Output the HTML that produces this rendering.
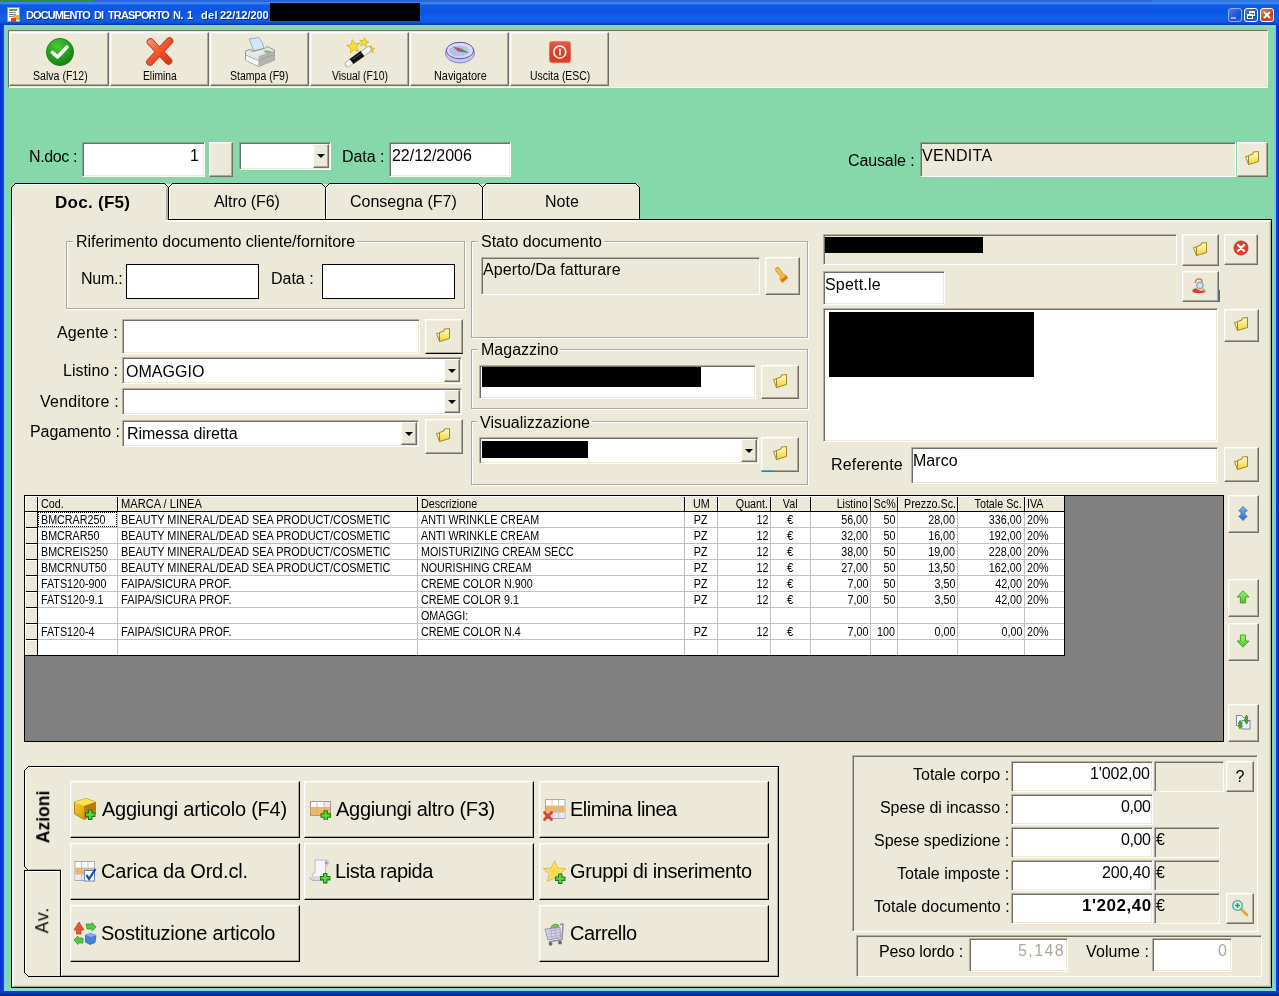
<!DOCTYPE html>
<html lang="it"><head><meta charset="utf-8"><title>DOCUMENTO DI TRASPORTO</title>
<style>
*{box-sizing:border-box;margin:0;padding:0}
html,body{width:1279px;height:996px;overflow:hidden;background:#0a3fd0}
body{position:relative;font-family:"Liberation Sans",sans-serif;font-size:16px;color:#000;line-height:1}
div,span,svg,input{position:absolute}
.t{white-space:pre;line-height:1;display:block;will-change:transform}
.face{background:#ece9d8}
.btn{background:#ece9d8;border:1px solid;border-color:#fff #716f64 #716f64 #fff;box-shadow:inset -1px -1px 0 #aca899,inset 1px 1px 0 #f4f2e8}
.btnk{background:#ece9d8;border:1px solid;border-color:#fff #000 #000 #fff;box-shadow:inset -1px -1px 0 #aca899,inset 1px 1px 0 #f4f2e8}
.btnb{background:#ece9d8;border:1px solid;border-color:#fff #716f64 #000 #fff;box-shadow:inset -1px -1px 0 #aca899,inset 1px 1px 0 #f4f2e8}
.edit{background:#fff;border:1px solid;border-color:rgba(113,111,100,.45) #fff #fff rgba(113,111,100,.45);background-clip:padding-box;box-shadow:inset 1px 1px 0 #716f64,inset -1px -1px 0 #ece9d8}
.editg{background:#ece9d8;border:1px solid;border-color:rgba(113,111,100,.45) #fff #fff rgba(113,111,100,.45);background-clip:padding-box;box-shadow:inset 1px 1px 0 #716f64,inset -1px -1px 0 #ece9d8}
.flat{background:#fff;border:1px solid #000}
.grp{border:1px solid #aca899;box-shadow:1px 1px 0 #fff,inset 1px 1px 0 #fff}
.leg{background:#ece9d8;padding:0 2px 0 3px}
.sunk{background:#ece9d8;border:1px solid;border-color:#8c8a7c #fff #fff #8c8a7c}
.red{background:#000}
.cb{background:#ece9d8;border:1px solid;border-color:#fff #716f64 #716f64 #fff;box-shadow:inset -1px -1px 0 #aca899}
.cb:after{content:"";position:absolute;left:50%;top:50%;margin:-2px 0 0 -4px;border:4px solid transparent;border-top-color:#000;border-bottom-width:0}
.g{font-size:12px}
.tb{font-size:12px}
.sx{position:static;display:inline-block}
.big{font-size:20px;letter-spacing:-0.27px}
.gray{color:#aca899}
</style></head>
<body>
<svg width="0" height="0" style="left:0;top:0"><defs>
<linearGradient id="gfo" x1="0" y1="0" x2="0" y2="1"><stop offset="0" stop-color="#fffbc8"/><stop offset="1" stop-color="#f2d534"/></linearGradient>
<radialGradient id="ggr" cx="0.4" cy="0.3" r="0.8"><stop offset="0" stop-color="#4cc83c"/><stop offset="0.6" stop-color="#1f9a1a"/><stop offset="1" stop-color="#157a14"/></radialGradient>
<linearGradient id="grd" x1="0" y1="0" x2="1" y2="1"><stop offset="0" stop-color="#ff8a6a"/><stop offset="0.5" stop-color="#f4502a"/><stop offset="1" stop-color="#d83a18"/></linearGradient>
<linearGradient id="gex" x1="0" y1="0" x2="0" y2="1"><stop offset="0" stop-color="#e0604a"/><stop offset="0.6" stop-color="#d0402c"/><stop offset="1" stop-color="#e83c20"/></linearGradient>
<linearGradient id="gbl" x1="0" y1="0" x2="0" y2="1"><stop offset="0" stop-color="#7ab8f0"/><stop offset="1" stop-color="#2a6fd0"/></linearGradient>
<linearGradient id="ggn" x1="0" y1="0" x2="0" y2="1"><stop offset="0" stop-color="#a0f070"/><stop offset="1" stop-color="#48c828"/></linearGradient>
<linearGradient id="gbx" x1="0" y1="0" x2="1" y2="1"><stop offset="0" stop-color="#ffd830"/><stop offset="1" stop-color="#c08000"/></linearGradient>
</defs></svg>
<div style="left:0px;top:0px;width:1279px;height:996px;background:linear-gradient(#0b4bd8,#0b4bd8)"></div>
<div style="left:0px;top:0px;width:4px;height:996px;background:linear-gradient(90deg,#0a2fd0,#0c3fe0 60%,#1650d8)"></div>
<div style="left:1276px;top:0px;width:3px;height:996px;background:linear-gradient(90deg,#0c3fd8,#0a2ccc)"></div>
<div style="left:0px;top:991px;width:1279px;height:5px;background:linear-gradient(#0a4fb0,#0a3aa8 40%,#001e98)"></div>
<div style="left:0px;top:0px;width:1279px;height:25px;background:linear-gradient(#2d62d8 0,#2d62d8 2px,#3f8cf5 2px,#2f7ff0 4px,#1059e6 5px,#0c56e4 12px,#1260ea 19px,#0e58e2 22px,#0840c0 24px,#0a3cb4 25px)"></div>
<div style="left:0px;top:0px;width:93px;height:2px;background:#2f8a45"></div>
<div style="left:1152px;top:0px;width:127px;height:2px;background:#3078e0"></div>
<div style="left:4px;top:25px;width:1272px;height:966px;background:#87d8a9"></div>
<div style="left:4px;top:25px;width:1272px;height:1px;background:#8ccce8"></div>
<div style="left:4px;top:26px;width:1272px;height:1px;background:#98d8c0"></div>
<div style="left:4px;top:25px;width:1px;height:966px;background:#7ccfd8"></div>
<div style="left:1274px;top:25px;width:2px;height:966px;background:#7cc8e0"></div>
<div style="left:4px;top:989px;width:1272px;height:2px;background:#86d4e4"></div>
<svg style="left:7px;top:7px" width="14" height="16" viewBox="0 0 14 16"><rect x="0.5" y="0.5" width="12" height="14" fill="#fdfdf0" stroke="#8a9ab0"/><rect x="2" y="2" width="8" height="2" fill="#5aa05a"/><rect x="2" y="5" width="7" height="1" fill="#889"/><rect x="2" y="7" width="7" height="1" fill="#889"/><rect x="2" y="9" width="5" height="1" fill="#889"/><rect x="6" y="8" width="6" height="5" fill="#e8b030"/><rect x="4" y="11" width="5" height="4" fill="#e04020"/></svg>
<span class="t" style="left:25.75px;top:9.5px;letter-spacing:-0.900px;font-size:11px;font-weight:bold;color:#fff;text-shadow:1px 1px 0 #0a2a90">DOCUMENTO </span>
<span class="t" style="left:94.25px;top:9.5px;letter-spacing:-0.900px;font-size:11px;font-weight:bold;color:#fff;text-shadow:1px 1px 0 #0a2a90">DI </span>
<span class="t" style="left:107.5px;top:9.5px;letter-spacing:-0.875px;font-size:11px;font-weight:bold;color:#fff;text-shadow:1px 1px 0 #0a2a90">TRASPORTO </span>
<span class="t" style="left:172.5px;top:9.5px;letter-spacing:-0.800px;font-size:11px;font-weight:bold;color:#fff;text-shadow:1px 1px 0 #0a2a90">N. </span>
<span class="t" style="left:186.75px;top:9.5px;letter-spacing:-0.300px;font-size:11px;font-weight:bold;color:#fff;text-shadow:1px 1px 0 #0a2a90">1  </span>
<span class="t" style="left:200.5px;top:9.5px;letter-spacing:0.300px;font-size:11px;font-weight:bold;color:#fff;text-shadow:1px 1px 0 #0a2a90">del </span>
<span class="t" style="left:220.25px;top:9.5px;letter-spacing:-0.025px;font-size:11px;font-weight:bold;color:#fff;text-shadow:1px 1px 0 #0a2a90">22/12/200</span>
<div class="red" style="left:270px;top:3px;width:150px;height:18px;"></div>
<div style="left:1228px;top:8px;width:14px;height:14px;background:linear-gradient(135deg,#4a7af0,#1f4fd8 60%,#2a5ae0);border:1px solid #8ab0f8;border-radius:3px;overflow:hidden"><svg width="14" height="14" style="left:-1px;top:-1px"><rect x="3" y="9" width="5" height="2" fill="#9ab4f0"/></svg></div>
<div style="left:1244px;top:8px;width:14px;height:14px;background:linear-gradient(135deg,#4a7af0,#1f4fd8 60%,#2a5ae0);border:1px solid #fff;border-radius:3px;overflow:hidden"><svg width="14" height="14" style="left:-1px;top:-1px"><rect x="5.5" y="3.5" width="5" height="4" fill="none" stroke="#fff"/><rect x="3.5" y="6.5" width="5" height="4" fill="#2a50d0" stroke="#fff"/><rect x="5" y="3" width="6" height="2" fill="#fff"/><rect x="3" y="6" width="6" height="2" fill="#fff"/></svg></div>
<div style="left:1260px;top:8px;width:14px;height:14px;background:linear-gradient(135deg,#e8875a,#c8401c 60%,#d0502a);border:1px solid #fff;border-radius:3px;overflow:hidden"><svg width="14" height="14" style="left:-1px;top:-1px"><path d="M4 4 L10 10 M10 4 L4 10" stroke="#fff" stroke-width="2"/></svg></div>
<div style="left:8px;top:30px;width:1260px;height:58px;background:#ece9d8;border:1px solid;border-color:#716f64 #fff #fff #716f64"></div>
<div class="btn" style="left:9px;top:32px;width:100px;height:54px;"></div>
<span class="t tb" style="left:32.75px;top:70.0px;"><span class="sx" style="transform:scaleX(0.8811);transform-origin:0 50%;">Salva (F12)</span></span>
<div class="btn" style="left:110px;top:32px;width:99px;height:54px;"></div>
<span class="t tb" style="left:143.0px;top:70.0px;"><span class="sx" style="transform:scaleX(0.8553);transform-origin:0 50%;">Elimina</span></span>
<div class="btn" style="left:210px;top:32px;width:99px;height:54px;"></div>
<span class="t tb" style="left:230.25px;top:70.0px;"><span class="sx" style="transform:scaleX(0.8769);transform-origin:0 50%;">Stampa (F9)</span></span>
<div class="btn" style="left:310px;top:32px;width:99px;height:54px;"></div>
<span class="t tb" style="left:332.0px;top:70.0px;"><span class="sx" style="transform:scaleX(0.8672);transform-origin:0 50%;">Visual (F10)</span></span>
<div class="btn" style="left:410px;top:32px;width:99px;height:54px;"></div>
<span class="t tb" style="left:433.5px;top:70.0px;"><span class="sx" style="transform:scaleX(0.9079);transform-origin:0 50%;">Navigatore</span></span>
<div class="btn" style="left:510px;top:32px;width:99px;height:54px;"></div>
<span class="t tb" style="left:530.0px;top:70.0px;"><span class="sx" style="transform:scaleX(0.8696);transform-origin:0 50%;">Uscita (ESC)</span></span>
<svg style="left:45px;top:36.7px" width="30" height="30" viewBox="0 0 30 30"><circle cx="15" cy="15" r="13.6" fill="url(#ggr)" stroke="#1a7a1a" stroke-width="0.8"/><path d="M7.5 15.5 L12.5 20 L22 10" fill="none" stroke="#fff" stroke-width="3.6" stroke-linecap="round" stroke-linejoin="round"/></svg>
<svg style="left:145px;top:36.7px" width="30" height="30" viewBox="0 0 30 30"><g fill="none" stroke-linecap="round"><path d="M5.5 5 L23.5 24 M24.5 4 L5 25" stroke="#b83a1c" stroke-width="7.6"/><path d="M5.5 5 L23.5 24 M24.5 4 L5 25" stroke="url(#grd)" stroke-width="5.8"/></g></svg>
<svg style="left:244px;top:36px" width="32" height="32" viewBox="0 0 32 32"><path d="M5 3 L15 1.5 Q19 6 20 12.5 L9 15 Q8 8 5 3 Z" fill="#cfe6fb" stroke="#8aa0b8" stroke-width="0.8"/><path d="M1.5 15 L6 13.5 L8.5 15.5 L20.5 12.5 L23 10.5 L30.5 14 L30.5 24 L14.5 30.5 L1.5 24 Z" fill="#e8e8e8" stroke="#8a8a8a" stroke-width="0.9" stroke-linejoin="round"/><path d="M14.5 20 L30.5 14.5 L30.5 24 L14.5 30.5 Z" fill="#b4b4b0"/><path d="M1.5 19 L14.5 24.5 L30.5 18.5" fill="none" stroke="#9a9a9a" stroke-width="0.8"/><path d="M2 20 L14 25 L14 30 L2 24 Z" fill="#fafafa"/><path d="M22 14 L28 15.5 L25 17.5 L19 16 Z" fill="#7cc088"/></svg>
<svg style="left:344px;top:35.6px" width="32" height="32" viewBox="0 0 32 32"><polygon points="8.3,3.6 10.9,7.7 15.7,7.2 12.6,10.9 14.5,15.4 10.0,13.6 6.4,16.8 6.7,12.0 2.6,9.5 7.2,8.3" fill="#f8e02c" stroke="#d8b020" stroke-width="0.8" stroke-linejoin="round"/><polygon points="20.8,1.8 21.6,5.0 24.8,5.8 21.9,7.5 22.1,10.8 19.6,8.6 16.5,9.8 17.9,6.8 15.8,4.2 19.1,4.6" fill="#f8e02c" stroke="#d8b020" stroke-width="0.8" stroke-linejoin="round"/><polygon points="27.0,9.7 28.0,12.1 30.6,12.3 28.6,14.0 29.2,16.6 27.0,15.2 24.8,16.6 25.4,14.0 23.4,12.3 26.0,12.1" fill="#f8e02c" stroke="#d8b020" stroke-width="0.8" stroke-linejoin="round"/><path d="M4 28 L24.5 13.5" stroke="#a8a8a8" stroke-width="6.4" stroke-linecap="round"/><path d="M4 28 L24.5 13.5" stroke="#f6f6f6" stroke-width="4.6" stroke-linecap="round"/><path d="M7.5 25.5 L18.5 17.7" stroke="#111" stroke-width="6.4" stroke-linecap="butt"/><path d="M8.5 23.3 L18 16.6" stroke="#555" stroke-width="1" /></svg>
<svg style="left:444px;top:40px" width="32" height="24" viewBox="0 0 32 24"><ellipse cx="16" cy="13" rx="14.6" ry="10" fill="#c8c4f0" stroke="#8a86c0" stroke-width="1"/><ellipse cx="16" cy="10.5" rx="13.6" ry="8.2" fill="#dcd8fa" stroke="#5a58a0" stroke-width="1"/><ellipse cx="15" cy="11" rx="10" ry="5.5" fill="#b8c0e8"/><path d="M9 6.5 L17 8.5 L14 11.5 Z" fill="#c84860"/><path d="M17 8.5 L25.5 13 L14 11.5 Z" fill="#3a9a50"/></svg>
<svg style="left:548px;top:40px" width="24" height="24" viewBox="0 0 24 24"><rect x="1" y="1" width="22" height="22" rx="3" fill="url(#gex)" stroke="#f8d8c8" stroke-width="0.6"/><circle cx="11.8" cy="12" r="6" fill="none" stroke="#fdeedd" stroke-width="1.7"/><rect x="11" y="8.6" width="1.8" height="6.8" fill="#fdeedd"/></svg>
<span class="t" style="left:28.5px;top:148.5px;letter-spacing:-0.375px;">N.doc :</span>
<div class="edit" style="left:82px;top:142px;width:123px;height:35px;"></div>
<span class="t" style="left:189.5px;top:147.5px;">1</span>
<div class="btn" style="left:209px;top:142px;width:24px;height:35px;"></div>
<div class="edit" style="left:239px;top:142px;width:92px;height:28px;"></div>
<div class="cb" style="left:313px;top:144px;width:16px;height:24px;"></div>
<span class="t" style="left:342.0px;top:148.5px;letter-spacing:-0.050px;">Data :</span>
<div class="edit" style="left:389px;top:142px;width:122px;height:35px;"></div>
<span class="t" style="left:391.5px;top:147.5px;letter-spacing:-0.028px;">22/12/2006</span>
<span class="t" style="left:847.75px;top:152.5px;letter-spacing:-0.125px;">Causale :</span>
<div class="editg" style="left:920px;top:142px;width:316px;height:35px;"></div>
<span class="t" style="left:922.0px;top:147.5px;letter-spacing:0.333px;">VENDITA</span>
<div class="btn" style="left:1237px;top:142px;width:31px;height:35px;"></div>
<svg style="left:1244px;top:150px" width="16" height="16" viewBox="0 0 16 16"><path d="M1.5 6.5 L4.5 14.5 L4.8 6 Z" fill="#fff6b0" stroke="#a8882c" stroke-width="1" stroke-linejoin="round"/><path d="M4.5 5.5 L9 4 L9.3 2 L14.5 1.6 L14.5 11.5 L4.5 14.5 Z" fill="url(#gfo)" stroke="#a08428" stroke-width="1" stroke-linejoin="round"/></svg>
<div style="left:11px;top:219px;width:1261px;height:769px;background:#ece9d8;border:1px solid #000;box-shadow:inset 1px 1px 0 #fff,inset -1px -1px 0 #aca899,inset 2px 2px 0 #f8f7f0,inset -2px -2px 0 #d8d5c4"></div>
<svg style="left:0;top:180px" width="660" height="45" viewBox="0 180 660 45" shape-rendering="crispEdges"><path d="M11.5 222 L11.5 187.5 L15.5 183.5 L635.5 183.5 L639.5 187.5 L639.5 219.5 L11.5 219.5" fill="#ece9d8" stroke="none"/><path d="M11.5 219.5 L11.5 187.5 L15.5 183.5 L164.5 183.5 L168.5 187.5 L168.5 219.5" fill="none" stroke="#000"/><path d="M12.5 219 L12.5 188 L16 184.5 L164 184.5" fill="none" stroke="#fff"/><path d="M168.5 219.5 L168.5 187.5 L172.5 183.5 L321.5 183.5 L325.5 187.5 L325.5 219.5" fill="none" stroke="#000"/><path d="M169.5 219 L169.5 188 L173 184.5 L321 184.5" fill="none" stroke="#fff"/><path d="M325.5 219.5 L325.5 187.5 L329.5 183.5 L478.5 183.5 L482.5 187.5 L482.5 219.5" fill="none" stroke="#000"/><path d="M326.5 219 L326.5 188 L330 184.5 L478 184.5" fill="none" stroke="#fff"/><path d="M482.5 219.5 L482.5 187.5 L486.5 183.5 L635.5 183.5 L639.5 187.5 L639.5 219.5" fill="none" stroke="#000"/><path d="M483.5 219 L483.5 188 L487 184.5 L635 184.5" fill="none" stroke="#fff"/><rect x="166" y="188" width="2" height="32" fill="#b4b1a0"/><rect x="168" y="219" width="472" height="1" fill="#000"/><rect x="12" y="219" width="154" height="3" fill="#ece9d8"/><rect x="12" y="219" width="1" height="3" fill="#fff"/></svg>
<span class="t" style="left:54.5px;top:193.5px;letter-spacing:0.281px;font-size:17px;font-weight:bold;">Doc. (F5)</span>
<span class="t" style="left:214.25px;top:193.5px;letter-spacing:-0.083px;">Altro (F6)</span>
<span class="t" style="left:350.25px;top:193.5px;letter-spacing:0.000px;">Consegna (F7)</span>
<span class="t" style="left:544.5px;top:193.5px;letter-spacing:0.000px;">Note</span>
<div class="grp" style="left:66px;top:241px;width:399px;height:68px;"></div><span class="t leg" style="left:73px;top:233.5px;">Riferimento documento cliente/fornitore</span>
<span class="t" style="left:81.0px;top:270.5px;letter-spacing:-0.250px;">Num.:</span>
<div class="flat" style="left:126px;top:264px;width:133px;height:35px;"></div>
<span class="t" style="left:271.25px;top:270.5px;letter-spacing:-0.020px;">Data :</span>
<div class="flat" style="left:322px;top:264px;width:133px;height:35px;"></div>
<span class="t" style="left:57.25px;top:324.5px;letter-spacing:0.143px;">Agente :</span>
<div class="edit" style="left:122px;top:319px;width:298px;height:35px;"></div>
<div class="btnb" style="left:425px;top:319px;width:38px;height:35px;"></div>
<svg style="left:435px;top:327px" width="16" height="16" viewBox="0 0 16 16"><path d="M1.5 6.5 L4.5 14.5 L4.8 6 Z" fill="#fff6b0" stroke="#a8882c" stroke-width="1" stroke-linejoin="round"/><path d="M4.5 5.5 L9 4 L9.3 2 L14.5 1.6 L14.5 11.5 L4.5 14.5 Z" fill="url(#gfo)" stroke="#a08428" stroke-width="1" stroke-linejoin="round"/></svg>
<span class="t" style="left:63.25px;top:362.5px;letter-spacing:-0.012px;">Listino :</span>
<div class="edit" style="left:122px;top:357px;width:340px;height:27px;"></div>
<span class="t" style="left:126.25px;top:363.5px;letter-spacing:0.050px;">OMAGGIO</span>
<div class="cb" style="left:444px;top:359px;width:16px;height:23px;"></div>
<span class="t" style="left:40.0px;top:393.5px;letter-spacing:0.220px;">Venditore :</span>
<div class="edit" style="left:122px;top:388px;width:340px;height:27px;"></div>
<div class="cb" style="left:444px;top:390px;width:16px;height:23px;"></div>
<span class="t" style="left:30.25px;top:423.5px;letter-spacing:-0.080px;">Pagamento :</span>
<div class="edit" style="left:122px;top:420px;width:297px;height:27px;"></div>
<span class="t" style="left:126.5px;top:425.5px;letter-spacing:-0.036px;">Rimessa diretta</span>
<div class="cb" style="left:401px;top:422px;width:16px;height:23px;"></div>
<div class="btn" style="left:425px;top:419px;width:38px;height:35px;"></div>
<svg style="left:435px;top:427px" width="16" height="16" viewBox="0 0 16 16"><path d="M1.5 6.5 L4.5 14.5 L4.8 6 Z" fill="#fff6b0" stroke="#a8882c" stroke-width="1" stroke-linejoin="round"/><path d="M4.5 5.5 L9 4 L9.3 2 L14.5 1.6 L14.5 11.5 L4.5 14.5 Z" fill="url(#gfo)" stroke="#a08428" stroke-width="1" stroke-linejoin="round"/></svg>
<div class="grp" style="left:471px;top:241px;width:337px;height:97px;"></div><span class="t leg" style="left:478px;top:233.5px;">Stato documento</span>
<div class="editg" style="left:481px;top:257px;width:279px;height:38px;"></div>
<span class="t" style="left:483.0px;top:261.5px;letter-spacing:0.083px;">Aperto/Da fatturare</span>
<div class="btn" style="left:765px;top:257px;width:35px;height:38px;"></div>
<svg style="left:773px;top:266px" width="16" height="18" viewBox="0 0 16 18"><path d="M3 2 Q5 0.5 6.5 2.5 L10 8 L13 9.5 L14.5 12 L9.5 16.5 L7 14 L7.5 10.5 L3 5 Q2 3.2 3 2 Z" fill="#f0c040" stroke="#c88820" stroke-width="0.8"/><path d="M8 13.5 L13.5 9.5 L14.5 12 L9.5 16.5 Z" fill="#d87818"/></svg>
<div class="grp" style="left:471px;top:349px;width:337px;height:60px;"></div><span class="t leg" style="left:478px;top:341.5px;">Magazzino</span>
<div class="edit" style="left:479px;top:365px;width:277px;height:34px;"></div>
<div class="red" style="left:482px;top:367px;width:219px;height:20px;"></div>
<div class="btn" style="left:761px;top:365px;width:38px;height:34px;"></div>
<svg style="left:772px;top:373px" width="16" height="16" viewBox="0 0 16 16"><path d="M1.5 6.5 L4.5 14.5 L4.8 6 Z" fill="#fff6b0" stroke="#a8882c" stroke-width="1" stroke-linejoin="round"/><path d="M4.5 5.5 L9 4 L9.3 2 L14.5 1.6 L14.5 11.5 L4.5 14.5 Z" fill="url(#gfo)" stroke="#a08428" stroke-width="1" stroke-linejoin="round"/></svg>
<div class="grp" style="left:471px;top:421px;width:337px;height:64px;"></div><span class="t leg" style="left:477px;top:414.5px;">Visualizzazione</span>
<div class="edit" style="left:479px;top:437px;width:280px;height:27px;"></div>
<div class="red" style="left:482px;top:441px;width:106px;height:17px;"></div>
<div class="cb" style="left:741px;top:439px;width:16px;height:23px;"></div>
<div class="btn" style="left:761px;top:437px;width:38px;height:35px;"></div>
<div style="left:761px;top:470px;width:13px;height:1px;background:#40b8c8"></div>
<svg style="left:772px;top:445px" width="16" height="16" viewBox="0 0 16 16"><path d="M1.5 6.5 L4.5 14.5 L4.8 6 Z" fill="#fff6b0" stroke="#a8882c" stroke-width="1" stroke-linejoin="round"/><path d="M4.5 5.5 L9 4 L9.3 2 L14.5 1.6 L14.5 11.5 L4.5 14.5 Z" fill="url(#gfo)" stroke="#a08428" stroke-width="1" stroke-linejoin="round"/></svg>
<div class="editg" style="left:823px;top:234px;width:354px;height:31px;"></div>
<div class="red" style="left:825px;top:237px;width:158px;height:16px;"></div>
<div class="btn" style="left:1182px;top:234px;width:37px;height:32px;"></div>
<svg style="left:1192px;top:241px" width="16" height="16" viewBox="0 0 16 16"><path d="M1.5 6.5 L4.5 14.5 L4.8 6 Z" fill="#fff6b0" stroke="#a8882c" stroke-width="1" stroke-linejoin="round"/><path d="M4.5 5.5 L9 4 L9.3 2 L14.5 1.6 L14.5 11.5 L4.5 14.5 Z" fill="url(#gfo)" stroke="#a08428" stroke-width="1" stroke-linejoin="round"/></svg>
<div class="btn" style="left:1224px;top:234px;width:34px;height:31px;"></div>
<svg style="left:1233px;top:240px" width="16" height="16" viewBox="0 0 16 16"><circle cx="8" cy="8" r="7" fill="#e04030" stroke="#b02818" stroke-width="0.8"/><path d="M5 5 L11 11 M11 5 L5 11" stroke="#fff" stroke-width="2.2" stroke-linecap="round"/></svg>
<div class="edit" style="left:823px;top:271px;width:122px;height:34px;"></div>
<span class="t" style="left:825.25px;top:276.5px;letter-spacing:0.200px;">Spett.le</span>
<div class="btn" style="left:1182px;top:271px;width:37px;height:31px;"></div>
<div style="left:1218px;top:290px;width:2px;height:12px;background:#5a6a8a"></div>
<svg style="left:1191px;top:278px" width="16" height="16" viewBox="0 0 16 16"><path d="M4.5 5 Q4 1 8 1 Q11.5 1 11 4.5" fill="none" stroke="#e08040" stroke-width="1.6"/><circle cx="9" cy="7.5" r="3.3" fill="#c8e0f8" stroke="#7090c0" stroke-width="1"/><path d="M1.5 12 Q4 9 7 11.5 Q10 13.5 13 12 L14.5 14 Q8 16.5 1.5 14 Z" fill="#d04828"/><path d="M11.5 10.5 L15 14" stroke="#e0a060" stroke-width="1.6"/></svg>
<div class="edit" style="left:823px;top:308px;width:395px;height:134px;"></div>
<div class="red" style="left:829px;top:312px;width:205px;height:65px;"></div>
<div class="btn" style="left:1224px;top:309px;width:35px;height:33px;"></div>
<svg style="left:1233px;top:316px" width="16" height="16" viewBox="0 0 16 16"><path d="M1.5 6.5 L4.5 14.5 L4.8 6 Z" fill="#fff6b0" stroke="#a8882c" stroke-width="1" stroke-linejoin="round"/><path d="M4.5 5.5 L9 4 L9.3 2 L14.5 1.6 L14.5 11.5 L4.5 14.5 Z" fill="url(#gfo)" stroke="#a08428" stroke-width="1" stroke-linejoin="round"/></svg>
<span class="t" style="left:830.75px;top:456.5px;letter-spacing:0.175px;">Referente</span>
<div class="edit" style="left:911px;top:447px;width:307px;height:37px;"></div>
<span class="t" style="left:913.25px;top:452.5px;letter-spacing:0.025px;">Marco</span>
<div class="btn" style="left:1224px;top:447px;width:35px;height:35px;"></div>
<svg style="left:1233px;top:455px" width="16" height="16" viewBox="0 0 16 16"><path d="M1.5 6.5 L4.5 14.5 L4.8 6 Z" fill="#fff6b0" stroke="#a8882c" stroke-width="1" stroke-linejoin="round"/><path d="M4.5 5.5 L9 4 L9.3 2 L14.5 1.6 L14.5 11.5 L4.5 14.5 Z" fill="url(#gfo)" stroke="#a08428" stroke-width="1" stroke-linejoin="round"/></svg>
<div style="left:24px;top:495px;width:1200px;height:247px;background:#808080;border:1px solid #000"></div>
<div style="left:25px;top:496px;width:1040px;height:160px;background:#fff"></div>
<div style="left:25px;top:496px;width:1039px;height:16px;background:#ece9d8"></div>
<div style="left:25px;top:496px;width:13px;height:160px;background:#ece9d8"></div>
<div style="left:38px;top:527px;width:1026px;height:1px;background:#c0c0c0"></div>
<div style="left:25px;top:527px;width:13px;height:1px;background:#000"></div>
<div style="left:38px;top:543px;width:1026px;height:1px;background:#c0c0c0"></div>
<div style="left:25px;top:543px;width:13px;height:1px;background:#000"></div>
<div style="left:38px;top:559px;width:1026px;height:1px;background:#c0c0c0"></div>
<div style="left:25px;top:559px;width:13px;height:1px;background:#000"></div>
<div style="left:38px;top:575px;width:1026px;height:1px;background:#c0c0c0"></div>
<div style="left:25px;top:575px;width:13px;height:1px;background:#000"></div>
<div style="left:38px;top:591px;width:1026px;height:1px;background:#c0c0c0"></div>
<div style="left:25px;top:591px;width:13px;height:1px;background:#000"></div>
<div style="left:38px;top:607px;width:1026px;height:1px;background:#c0c0c0"></div>
<div style="left:25px;top:607px;width:13px;height:1px;background:#000"></div>
<div style="left:38px;top:623px;width:1026px;height:1px;background:#c0c0c0"></div>
<div style="left:25px;top:623px;width:13px;height:1px;background:#000"></div>
<div style="left:38px;top:639px;width:1026px;height:1px;background:#c0c0c0"></div>
<div style="left:25px;top:639px;width:13px;height:1px;background:#000"></div>
<div style="left:25px;top:511px;width:1040px;height:1px;background:#000"></div>
<div style="left:25px;top:655px;width:1040px;height:1px;background:#000"></div>
<div style="left:1064px;top:496px;width:1px;height:160px;background:#000"></div>
<div style="left:37px;top:512px;width:1px;height:143px;background:#000"></div>
<div style="left:37px;top:496px;width:1px;height:16px;background:#000"></div>
<div style="left:117px;top:512px;width:1px;height:143px;background:#c0c0c0"></div>
<div style="left:117px;top:496px;width:1px;height:16px;background:#000"></div>
<div style="left:417px;top:512px;width:1px;height:143px;background:#c0c0c0"></div>
<div style="left:417px;top:496px;width:1px;height:16px;background:#000"></div>
<div style="left:684px;top:512px;width:1px;height:143px;background:#c0c0c0"></div>
<div style="left:684px;top:496px;width:1px;height:16px;background:#000"></div>
<div style="left:717px;top:512px;width:1px;height:143px;background:#c0c0c0"></div>
<div style="left:717px;top:496px;width:1px;height:16px;background:#000"></div>
<div style="left:770px;top:512px;width:1px;height:143px;background:#c0c0c0"></div>
<div style="left:770px;top:496px;width:1px;height:16px;background:#000"></div>
<div style="left:810px;top:512px;width:1px;height:143px;background:#c0c0c0"></div>
<div style="left:810px;top:496px;width:1px;height:16px;background:#000"></div>
<div style="left:870px;top:512px;width:1px;height:143px;background:#c0c0c0"></div>
<div style="left:870px;top:496px;width:1px;height:16px;background:#000"></div>
<div style="left:897px;top:512px;width:1px;height:143px;background:#c0c0c0"></div>
<div style="left:897px;top:496px;width:1px;height:16px;background:#000"></div>
<div style="left:957px;top:512px;width:1px;height:143px;background:#c0c0c0"></div>
<div style="left:957px;top:496px;width:1px;height:16px;background:#000"></div>
<div style="left:1024px;top:512px;width:1px;height:143px;background:#c0c0c0"></div>
<div style="left:1024px;top:496px;width:1px;height:16px;background:#000"></div>
<div style="left:25px;top:496px;width:1px;height:15px;background:#fff"></div>
<div style="left:38px;top:496px;width:1px;height:15px;background:#fff"></div>
<div style="left:118px;top:496px;width:1px;height:15px;background:#fff"></div>
<div style="left:418px;top:496px;width:1px;height:15px;background:#fff"></div>
<div style="left:685px;top:496px;width:1px;height:15px;background:#fff"></div>
<div style="left:718px;top:496px;width:1px;height:15px;background:#fff"></div>
<div style="left:771px;top:496px;width:1px;height:15px;background:#fff"></div>
<div style="left:811px;top:496px;width:1px;height:15px;background:#fff"></div>
<div style="left:871px;top:496px;width:1px;height:15px;background:#fff"></div>
<div style="left:898px;top:496px;width:1px;height:15px;background:#fff"></div>
<div style="left:958px;top:496px;width:1px;height:15px;background:#fff"></div>
<div style="left:1025px;top:496px;width:1px;height:15px;background:#fff"></div>
<div style="left:25px;top:496px;width:1039px;height:1px;background:#fff"></div>
<div style="left:25px;top:512px;width:12px;height:1px;background:#fff"></div>
<div style="left:25px;top:528px;width:12px;height:1px;background:#fff"></div>
<div style="left:25px;top:544px;width:12px;height:1px;background:#fff"></div>
<div style="left:25px;top:560px;width:12px;height:1px;background:#fff"></div>
<div style="left:25px;top:576px;width:12px;height:1px;background:#fff"></div>
<div style="left:25px;top:592px;width:12px;height:1px;background:#fff"></div>
<div style="left:25px;top:608px;width:12px;height:1px;background:#fff"></div>
<div style="left:25px;top:624px;width:12px;height:1px;background:#fff"></div>
<div style="left:25px;top:640px;width:12px;height:1px;background:#fff"></div>
<div style="left:25px;top:512px;width:1px;height:143px;background:#fff"></div>
<span class="t g" style="left:41px;top:498.0px;"><span class="sx" style="transform:scaleX(0.895);transform-origin:0 50%;">Cod.</span></span>
<span class="t g" style="left:120.5px;top:498.0px;"><span class="sx" style="transform:scaleX(0.9256);transform-origin:0 50%;">MARCA / LINEA</span></span>
<span class="t g" style="left:421px;top:498.0px;"><span class="sx" style="transform:scaleX(0.895);transform-origin:0 50%;">Descrizione</span></span>
<span class="t g" style="left:685px;top:498.0px;width:32px;text-align:center;"><span class="sx" style="transform:scaleX(0.895);transform-origin:50% 50%;">UM</span></span>
<span class="t g" style="left:718px;top:498.0px;width:50px;text-align:right;"><span class="sx" style="transform:scaleX(0.895);transform-origin:100% 50%;">Quant.</span></span>
<span class="t g" style="left:771px;top:498.0px;width:39px;text-align:center;"><span class="sx" style="transform:scaleX(0.895);transform-origin:50% 50%;">Val</span></span>
<span class="t g" style="left:811px;top:498.0px;width:57px;text-align:right;"><span class="sx" style="transform:scaleX(0.895);transform-origin:100% 50%;">Listino</span></span>
<span class="t g" style="left:871px;top:498.0px;width:24px;text-align:right;"><span class="sx" style="transform:scaleX(0.895);transform-origin:100% 50%;">Sc%</span></span>
<span class="t g" style="left:898px;top:498.0px;width:57px;text-align:right;"><span class="sx" style="transform:scaleX(0.895);transform-origin:100% 50%;">Prezzo.Sc.</span></span>
<span class="t g" style="left:958px;top:498.0px;width:64px;text-align:right;"><span class="sx" style="transform:scaleX(0.895);transform-origin:100% 50%;">Totale Sc.</span></span>
<span class="t g" style="left:1027px;top:498.0px;"><span class="sx" style="transform:scaleX(0.895);transform-origin:0 50%;">IVA</span></span>
<span class="t g" style="left:41px;top:514.0px;"><span class="sx" style="transform:scaleX(0.895);transform-origin:0 50%;">BMCRAR250</span></span>
<span class="t g" style="left:121.25px;top:514.0px;"><span class="sx" style="transform:scaleX(0.9068);transform-origin:0 50%;">BEAUTY MINERAL/DEAD SEA PRODUCT/COSMETIC</span></span>
<span class="t g" style="left:421px;top:514.0px;"><span class="sx" style="transform:scaleX(0.895);transform-origin:0 50%;">ANTI WRINKLE CREAM</span></span>
<span class="t g" style="left:685px;top:514.0px;width:32px;text-align:center;"><span class="sx" style="transform:scaleX(0.895);transform-origin:50% 50%;">PZ</span></span>
<span class="t g" style="left:718px;top:514.0px;width:50px;text-align:right;"><span class="sx" style="transform:scaleX(0.895);transform-origin:100% 50%;">12</span></span>
<span class="t g" style="left:771px;top:514.0px;width:39px;text-align:center;"><span class="sx" style="transform:scaleX(0.895);transform-origin:50% 50%;">€</span></span>
<span class="t g" style="left:811px;top:514.0px;width:57px;text-align:right;"><span class="sx" style="transform:scaleX(0.895);transform-origin:100% 50%;">56,00</span></span>
<span class="t g" style="left:871px;top:514.0px;width:24px;text-align:right;"><span class="sx" style="transform:scaleX(0.895);transform-origin:100% 50%;">50</span></span>
<span class="t g" style="left:898px;top:514.0px;width:57px;text-align:right;"><span class="sx" style="transform:scaleX(0.895);transform-origin:100% 50%;">28,00</span></span>
<span class="t g" style="left:958px;top:514.0px;width:64px;text-align:right;"><span class="sx" style="transform:scaleX(0.895);transform-origin:100% 50%;">336,00</span></span>
<span class="t g" style="left:1027px;top:514.0px;"><span class="sx" style="transform:scaleX(0.895);transform-origin:0 50%;">20%</span></span>
<span class="t g" style="left:41px;top:530.0px;"><span class="sx" style="transform:scaleX(0.895);transform-origin:0 50%;">BMCRAR50</span></span>
<span class="t g" style="left:121.25px;top:530.0px;"><span class="sx" style="transform:scaleX(0.9068);transform-origin:0 50%;">BEAUTY MINERAL/DEAD SEA PRODUCT/COSMETIC</span></span>
<span class="t g" style="left:421px;top:530.0px;"><span class="sx" style="transform:scaleX(0.895);transform-origin:0 50%;">ANTI WRINKLE CREAM</span></span>
<span class="t g" style="left:685px;top:530.0px;width:32px;text-align:center;"><span class="sx" style="transform:scaleX(0.895);transform-origin:50% 50%;">PZ</span></span>
<span class="t g" style="left:718px;top:530.0px;width:50px;text-align:right;"><span class="sx" style="transform:scaleX(0.895);transform-origin:100% 50%;">12</span></span>
<span class="t g" style="left:771px;top:530.0px;width:39px;text-align:center;"><span class="sx" style="transform:scaleX(0.895);transform-origin:50% 50%;">€</span></span>
<span class="t g" style="left:811px;top:530.0px;width:57px;text-align:right;"><span class="sx" style="transform:scaleX(0.895);transform-origin:100% 50%;">32,00</span></span>
<span class="t g" style="left:871px;top:530.0px;width:24px;text-align:right;"><span class="sx" style="transform:scaleX(0.895);transform-origin:100% 50%;">50</span></span>
<span class="t g" style="left:898px;top:530.0px;width:57px;text-align:right;"><span class="sx" style="transform:scaleX(0.895);transform-origin:100% 50%;">16,00</span></span>
<span class="t g" style="left:958px;top:530.0px;width:64px;text-align:right;"><span class="sx" style="transform:scaleX(0.895);transform-origin:100% 50%;">192,00</span></span>
<span class="t g" style="left:1027px;top:530.0px;"><span class="sx" style="transform:scaleX(0.895);transform-origin:0 50%;">20%</span></span>
<span class="t g" style="left:41px;top:546.0px;"><span class="sx" style="transform:scaleX(0.895);transform-origin:0 50%;">BMCREIS250</span></span>
<span class="t g" style="left:121.25px;top:546.0px;"><span class="sx" style="transform:scaleX(0.9068);transform-origin:0 50%;">BEAUTY MINERAL/DEAD SEA PRODUCT/COSMETIC</span></span>
<span class="t g" style="left:421px;top:546.0px;"><span class="sx" style="transform:scaleX(0.895);transform-origin:0 50%;">MOISTURIZING CREAM SECC</span></span>
<span class="t g" style="left:685px;top:546.0px;width:32px;text-align:center;"><span class="sx" style="transform:scaleX(0.895);transform-origin:50% 50%;">PZ</span></span>
<span class="t g" style="left:718px;top:546.0px;width:50px;text-align:right;"><span class="sx" style="transform:scaleX(0.895);transform-origin:100% 50%;">12</span></span>
<span class="t g" style="left:771px;top:546.0px;width:39px;text-align:center;"><span class="sx" style="transform:scaleX(0.895);transform-origin:50% 50%;">€</span></span>
<span class="t g" style="left:811px;top:546.0px;width:57px;text-align:right;"><span class="sx" style="transform:scaleX(0.895);transform-origin:100% 50%;">38,00</span></span>
<span class="t g" style="left:871px;top:546.0px;width:24px;text-align:right;"><span class="sx" style="transform:scaleX(0.895);transform-origin:100% 50%;">50</span></span>
<span class="t g" style="left:898px;top:546.0px;width:57px;text-align:right;"><span class="sx" style="transform:scaleX(0.895);transform-origin:100% 50%;">19,00</span></span>
<span class="t g" style="left:958px;top:546.0px;width:64px;text-align:right;"><span class="sx" style="transform:scaleX(0.895);transform-origin:100% 50%;">228,00</span></span>
<span class="t g" style="left:1027px;top:546.0px;"><span class="sx" style="transform:scaleX(0.895);transform-origin:0 50%;">20%</span></span>
<span class="t g" style="left:41px;top:562.0px;"><span class="sx" style="transform:scaleX(0.895);transform-origin:0 50%;">BMCRNUT50</span></span>
<span class="t g" style="left:121.25px;top:562.0px;"><span class="sx" style="transform:scaleX(0.9068);transform-origin:0 50%;">BEAUTY MINERAL/DEAD SEA PRODUCT/COSMETIC</span></span>
<span class="t g" style="left:421px;top:562.0px;"><span class="sx" style="transform:scaleX(0.895);transform-origin:0 50%;">NOURISHING CREAM</span></span>
<span class="t g" style="left:685px;top:562.0px;width:32px;text-align:center;"><span class="sx" style="transform:scaleX(0.895);transform-origin:50% 50%;">PZ</span></span>
<span class="t g" style="left:718px;top:562.0px;width:50px;text-align:right;"><span class="sx" style="transform:scaleX(0.895);transform-origin:100% 50%;">12</span></span>
<span class="t g" style="left:771px;top:562.0px;width:39px;text-align:center;"><span class="sx" style="transform:scaleX(0.895);transform-origin:50% 50%;">€</span></span>
<span class="t g" style="left:811px;top:562.0px;width:57px;text-align:right;"><span class="sx" style="transform:scaleX(0.895);transform-origin:100% 50%;">27,00</span></span>
<span class="t g" style="left:871px;top:562.0px;width:24px;text-align:right;"><span class="sx" style="transform:scaleX(0.895);transform-origin:100% 50%;">50</span></span>
<span class="t g" style="left:898px;top:562.0px;width:57px;text-align:right;"><span class="sx" style="transform:scaleX(0.895);transform-origin:100% 50%;">13,50</span></span>
<span class="t g" style="left:958px;top:562.0px;width:64px;text-align:right;"><span class="sx" style="transform:scaleX(0.895);transform-origin:100% 50%;">162,00</span></span>
<span class="t g" style="left:1027px;top:562.0px;"><span class="sx" style="transform:scaleX(0.895);transform-origin:0 50%;">20%</span></span>
<span class="t g" style="left:41px;top:578.0px;"><span class="sx" style="transform:scaleX(0.895);transform-origin:0 50%;">FATS120-900</span></span>
<span class="t g" style="left:121.25px;top:578.0px;"><span class="sx" style="transform:scaleX(0.9220);transform-origin:0 50%;">FAIPA/SICURA PROF.</span></span>
<span class="t g" style="left:421px;top:578.0px;"><span class="sx" style="transform:scaleX(0.895);transform-origin:0 50%;">CREME COLOR N.900</span></span>
<span class="t g" style="left:685px;top:578.0px;width:32px;text-align:center;"><span class="sx" style="transform:scaleX(0.895);transform-origin:50% 50%;">PZ</span></span>
<span class="t g" style="left:718px;top:578.0px;width:50px;text-align:right;"><span class="sx" style="transform:scaleX(0.895);transform-origin:100% 50%;">12</span></span>
<span class="t g" style="left:771px;top:578.0px;width:39px;text-align:center;"><span class="sx" style="transform:scaleX(0.895);transform-origin:50% 50%;">€</span></span>
<span class="t g" style="left:811px;top:578.0px;width:57px;text-align:right;"><span class="sx" style="transform:scaleX(0.895);transform-origin:100% 50%;">7,00</span></span>
<span class="t g" style="left:871px;top:578.0px;width:24px;text-align:right;"><span class="sx" style="transform:scaleX(0.895);transform-origin:100% 50%;">50</span></span>
<span class="t g" style="left:898px;top:578.0px;width:57px;text-align:right;"><span class="sx" style="transform:scaleX(0.895);transform-origin:100% 50%;">3,50</span></span>
<span class="t g" style="left:958px;top:578.0px;width:64px;text-align:right;"><span class="sx" style="transform:scaleX(0.895);transform-origin:100% 50%;">42,00</span></span>
<span class="t g" style="left:1027px;top:578.0px;"><span class="sx" style="transform:scaleX(0.895);transform-origin:0 50%;">20%</span></span>
<span class="t g" style="left:41px;top:594.0px;"><span class="sx" style="transform:scaleX(0.895);transform-origin:0 50%;">FATS120-9.1</span></span>
<span class="t g" style="left:121.25px;top:594.0px;"><span class="sx" style="transform:scaleX(0.9220);transform-origin:0 50%;">FAIPA/SICURA PROF.</span></span>
<span class="t g" style="left:421px;top:594.0px;"><span class="sx" style="transform:scaleX(0.895);transform-origin:0 50%;">CREME COLOR 9.1</span></span>
<span class="t g" style="left:685px;top:594.0px;width:32px;text-align:center;"><span class="sx" style="transform:scaleX(0.895);transform-origin:50% 50%;">PZ</span></span>
<span class="t g" style="left:718px;top:594.0px;width:50px;text-align:right;"><span class="sx" style="transform:scaleX(0.895);transform-origin:100% 50%;">12</span></span>
<span class="t g" style="left:771px;top:594.0px;width:39px;text-align:center;"><span class="sx" style="transform:scaleX(0.895);transform-origin:50% 50%;">€</span></span>
<span class="t g" style="left:811px;top:594.0px;width:57px;text-align:right;"><span class="sx" style="transform:scaleX(0.895);transform-origin:100% 50%;">7,00</span></span>
<span class="t g" style="left:871px;top:594.0px;width:24px;text-align:right;"><span class="sx" style="transform:scaleX(0.895);transform-origin:100% 50%;">50</span></span>
<span class="t g" style="left:898px;top:594.0px;width:57px;text-align:right;"><span class="sx" style="transform:scaleX(0.895);transform-origin:100% 50%;">3,50</span></span>
<span class="t g" style="left:958px;top:594.0px;width:64px;text-align:right;"><span class="sx" style="transform:scaleX(0.895);transform-origin:100% 50%;">42,00</span></span>
<span class="t g" style="left:1027px;top:594.0px;"><span class="sx" style="transform:scaleX(0.895);transform-origin:0 50%;">20%</span></span>
<span class="t g" style="left:421px;top:610.0px;"><span class="sx" style="transform:scaleX(0.895);transform-origin:0 50%;">OMAGGI:</span></span>
<span class="t g" style="left:41px;top:626.0px;"><span class="sx" style="transform:scaleX(0.895);transform-origin:0 50%;">FATS120-4</span></span>
<span class="t g" style="left:121.25px;top:626.0px;"><span class="sx" style="transform:scaleX(0.9220);transform-origin:0 50%;">FAIPA/SICURA PROF.</span></span>
<span class="t g" style="left:421px;top:626.0px;"><span class="sx" style="transform:scaleX(0.895);transform-origin:0 50%;">CREME COLOR N.4</span></span>
<span class="t g" style="left:685px;top:626.0px;width:32px;text-align:center;"><span class="sx" style="transform:scaleX(0.895);transform-origin:50% 50%;">PZ</span></span>
<span class="t g" style="left:718px;top:626.0px;width:50px;text-align:right;"><span class="sx" style="transform:scaleX(0.895);transform-origin:100% 50%;">12</span></span>
<span class="t g" style="left:771px;top:626.0px;width:39px;text-align:center;"><span class="sx" style="transform:scaleX(0.895);transform-origin:50% 50%;">€</span></span>
<span class="t g" style="left:811px;top:626.0px;width:57px;text-align:right;"><span class="sx" style="transform:scaleX(0.895);transform-origin:100% 50%;">7,00</span></span>
<span class="t g" style="left:871px;top:626.0px;width:24px;text-align:right;"><span class="sx" style="transform:scaleX(0.895);transform-origin:100% 50%;">100</span></span>
<span class="t g" style="left:898px;top:626.0px;width:57px;text-align:right;"><span class="sx" style="transform:scaleX(0.895);transform-origin:100% 50%;">0,00</span></span>
<span class="t g" style="left:958px;top:626.0px;width:64px;text-align:right;"><span class="sx" style="transform:scaleX(0.895);transform-origin:100% 50%;">0,00</span></span>
<span class="t g" style="left:1027px;top:626.0px;"><span class="sx" style="transform:scaleX(0.895);transform-origin:0 50%;">20%</span></span>
<div style="left:38px;top:512px;width:79px;height:15px;border:1px dotted #000"></div>
<div class="btn" style="left:1228px;top:495px;width:31px;height:38px;"></div>
<svg style="left:1238px;top:505.5px" width="10" height="15" viewBox="0 0 10 15"><path d="M5 0.5 L9.3 5 L7 5 L7 10 L9.3 10 L5 14.5 L0.7 10 L3 10 L3 5 L0.7 5 Z" fill="url(#gbl)" stroke="#2a60b8" stroke-width="0.8" stroke-linejoin="round"/></svg>
<div class="btn" style="left:1228px;top:579px;width:31px;height:38px;"></div>
<svg style="left:1236px;top:590px" width="14" height="14" viewBox="0 0 14 14"><path d="M7 0.8 L13 7 L9.6 7 L9.6 13 L4.4 13 L4.4 7 L1 7 Z" fill="url(#ggn)" stroke="#38a020" stroke-width="0.9" stroke-linejoin="round"/></svg>
<div class="btn" style="left:1228px;top:623px;width:31px;height:38px;"></div>
<svg style="left:1236px;top:634px" width="14" height="14" viewBox="0 0 14 14"><path d="M7 13.2 L13 7 L9.6 7 L9.6 1 L4.4 1 L4.4 7 L1 7 Z" fill="url(#ggn)" stroke="#38a020" stroke-width="0.9" stroke-linejoin="round"/></svg>
<div class="btn" style="left:1228px;top:704px;width:31px;height:38px;"></div>
<svg style="left:1235px;top:714px" width="16" height="16" viewBox="0 0 16 16"><path d="M1.5 1.5 L6.5 1.5 L9.5 4.5 L9.5 11.5 L1.5 11.5 Z" fill="#eef6fc" stroke="#707888" stroke-width="0.9"/><rect x="7" y="6.5" width="8" height="8.5" fill="#eef6fc" stroke="#707888" stroke-width="0.9"/><path d="M11.5 1 L13 4 L12.3 4 L12.3 7 L13.2 7 L11.5 10.2 L9.8 7 L10.7 7 L10.7 4 L10 4 Z" fill="#48c030" stroke="#2a8a18" stroke-width="0.9"/><path d="M5 6.5 L6.7 9.5 L5.8 9.5 L5.8 11.5 L6.7 11.5 L5 14.8 L3.3 11.5 L4.2 11.5 L4.2 9.5 L3.3 9.5 Z" fill="#48c030" stroke="#2a8a18" stroke-width="0.9"/></svg>
<svg style="left:20px;top:760px" width="765" height="222" viewBox="20 760 765 222" shape-rendering="crispEdges"><path d="M60.5 766.5 L778.5 766.5 L778.5 976.5 L60.5 976.5 Z" fill="#ece9d8" stroke="#000"/><path d="M61.5 975.5 L777.5 975.5 L777.5 767.5" fill="none" stroke="#aca899"/><path d="M61 767.5 L777 767.5" fill="none" stroke="#fff"/><path d="M60.5 870.5 L24.5 870.5 L24.5 972.5 L28.5 976.5 L60.5 976.5 Z" fill="#ece9d8" stroke="#000"/><path d="M60 871.5 L25.5 871.5 L25.5 972" fill="none" stroke="#fff"/><path d="M62 766.5 L28.5 766.5 L24.5 770.5 L24.5 866.5 L28.5 870.5 L62 870.5" fill="#ece9d8" stroke="#000"/><rect x="60" y="767" width="3" height="103" fill="#ece9d8"/><path d="M62 767.5 L29 767.5 L25.5 771 L25.5 866" fill="none" stroke="#fff"/><path d="M29 869.5 L61 869.5" fill="none" stroke="#aca899"/><rect x="61" y="870" width="1" height="106" fill="#fff"/></svg>
<span class="t" style="left:44px;top:816.5px;font-size:17.5px;font-weight:bold;transform:translate(-50%,-50%) rotate(-90deg)">Azioni</span>
<span class="t" style="left:43px;top:920px;font-size:17.5px;letter-spacing:1px;transform:translate(-50%,-50%) rotate(-90deg)">Av.</span>
<div class="btnk" style="left:70px;top:781px;width:230px;height:57px;"></div>
<span class="t big" style="left:102.0px;top:799.0px;letter-spacing:-0.238px;">Aggiungi articolo (F4)</span>
<svg style="left:73px;top:797px" width="24" height="24" viewBox="0 0 24 24"><path d="M1.5 5 L13 1.5 L22.5 5 L22.5 17 L11 22.5 L1.5 17 Z" fill="url(#gbx)" stroke="#a87808" stroke-width="0.8" stroke-linejoin="round"/><path d="M1.5 5 L11 9 L22.5 5 L13 1.5 Z" fill="#ffe450"/><path d="M11 9 L22.5 5 L22.5 17 L11 22.5 Z" fill="#b87c08"/><path d="M12.5 16h3v-3h3.4v3h3v3.4h-3v3h-3.4v-3h-3z" fill="#5ada3c" stroke="#1a7a1a" stroke-width="1.1" stroke-linejoin="round"/></svg>
<div class="btnk" style="left:304px;top:781px;width:230px;height:57px;"></div>
<span class="t big" style="left:335.75px;top:799.0px;letter-spacing:-0.292px;">Aggiungi altro (F3)</span>
<svg style="left:309px;top:800px" width="24" height="20" viewBox="0 0 24 20"><g transform="translate(1,1)"><rect x="0.5" y="0.5" width="20" height="14" fill="#fff" stroke="#b09878"/><rect x="1" y="6.5" width="19" height="7.5" fill="#f2b860"/><rect x="14" y="1" width="6" height="5.5" fill="#ece2f6"/><path d="M7 1v13M14 1v13M1 6.5h19" stroke="#c8b090" stroke-width="0.9"/></g><path d="M12 13.8h3v-3h3.4v3h3v3.4h-3v3h-3.4v-3h-3z" fill="#5ada3c" stroke="#1a7a1a" stroke-width="1.1" stroke-linejoin="round"/></svg>
<div class="btnk" style="left:539px;top:781px;width:230px;height:57px;"></div>
<span class="t big" style="left:570.25px;top:799.0px;letter-spacing:-0.521px;">Elimina linea</span>
<svg style="left:542px;top:797.5px" width="24" height="24" viewBox="0 0 24 24"><g transform="translate(3,1)"><rect x="0.5" y="0.5" width="19.5" height="19" fill="#fff" stroke="#a8a8b8" stroke-width="1"/><rect x="1" y="7" width="18.5" height="6" fill="#f6b458"/><rect x="1" y="13.5" width="18.5" height="5.5" fill="#e6e8fa"/><path d="M7 1v18M13.5 1v18M1 7h18.5M1 13.3h18.5" stroke="#c8c0c0" stroke-width="0.9"/></g><path d="M2.5 14.5 L9.5 21.5 M9.5 14.5 L2.5 21.5" stroke="#e04028" stroke-width="2.8" stroke-linecap="round"/></svg>
<div class="btnk" style="left:70px;top:843px;width:230px;height:57px;"></div>
<span class="t big" style="left:101.0px;top:861.0px;letter-spacing:-0.188px;">Carica da Ord.cl.</span>
<svg style="left:73.5px;top:860px" width="24" height="24" viewBox="0 0 24 24"><g transform="translate(0.5,1)"><rect x="0.5" y="0.5" width="19.5" height="19" fill="#fff" stroke="#a8a8b8" stroke-width="1"/><rect x="1" y="7" width="18.5" height="6" fill="#f6b458"/><rect x="1" y="13.5" width="18.5" height="5.5" fill="#e6e8fa"/><path d="M7 1v18M13.5 1v18M1 7h18.5M1 13.3h18.5" stroke="#c8c0c0" stroke-width="0.9"/></g><rect x="10.5" y="10.5" width="10" height="10.5" fill="#fff" stroke="#6888b8"/><path d="M12.5 15 L15 19 L21.5 9" fill="none" stroke="#1848b0" stroke-width="2.2"/></svg>
<div class="btnk" style="left:304px;top:843px;width:230px;height:57px;"></div>
<span class="t big" style="left:334.75px;top:861.0px;letter-spacing:-0.455px;">Lista rapida</span>
<svg style="left:308px;top:857.5px" width="24" height="26" viewBox="0 0 24 26"><path d="M7 2 L19 2 Q22 4 19.5 7 L17.5 7 L17.5 19 L5 19 Q3 17 5 15 L7 15 Z" fill="#f6f6f8" stroke="#b0b4c0" stroke-width="0.9"/><path d="M17 3 q3 0 3 2.5 l-3 1z" fill="#9098b0"/><path d="M2 19 Q1.5 22 6 22.5 L14 22.5 L14 19.5" fill="#d8d8e0" stroke="#a8acb8" stroke-width="0.9"/><path d="M12.5 18.5h3v-3h3.4v3h3v3.4h-3v3h-3.4v-3h-3z" fill="#5ada3c" stroke="#1a7a1a" stroke-width="1.1" stroke-linejoin="round"/></svg>
<div class="btnk" style="left:539px;top:843px;width:230px;height:57px;"></div>
<span class="t big" style="left:570.25px;top:861.0px;letter-spacing:-0.400px;">Gruppi di inserimento</span>
<svg style="left:542.5px;top:859.5px" width="24" height="24" viewBox="0 0 24 24"><polygon points="11.5,0.8 14.8,8 22.6,8.8 16.8,14 18.6,21.6 11.5,17.8 4.4,21.6 6.2,14 0.4,8.8 8.2,8" fill="#fbe070" stroke="#e0b440" stroke-width="0.9" stroke-linejoin="round"/><polygon points="11.5,5 13.5,10 18,10.5 14.5,13.5 15.5,18 11.5,15.5 7.5,18 8.5,13.5 5,10.5 9.5,10" fill="#fdd838" opacity="0.8"/><path d="M12.5 17h3v-3h3.4v3h3v3.4h-3v3h-3.4v-3h-3z" fill="#5ada3c" stroke="#1a7a1a" stroke-width="1.1" stroke-linejoin="round"/></svg>
<div class="btnk" style="left:70px;top:905px;width:230px;height:57px;"></div>
<span class="t big" style="left:101.0px;top:923.0px;letter-spacing:-0.225px;">Sostituzione articolo</span>
<svg style="left:73px;top:921px" width="24" height="24" viewBox="0 0 24 24"><path d="M6 1 L11 9 L8 9 L8 13 L3.5 13 L3.5 9 L1 9 Z" fill="#e85830" stroke="#b83818" stroke-width="0.7"/><path d="M13 3 L19 3 L19 1.5 L23 6 L19 10 L19 8 L14 8 Z" fill="#50c848" stroke="#289828" stroke-width="0.7"/><path d="M10 22 L5 22 L5 23.5 L1 19 L5 15 L5 17 L10 17 Z" fill="#50c848" stroke="#289828" stroke-width="0.7"/><path d="M12.5 14 L18 12.5 L23 14.5 L22 21.5 L17 23.5 L12.5 21 Z" fill="#4880d8" stroke="#2858a8" stroke-width="0.7"/><path d="M12.5 14 L17.5 16 L23 14.5 L18 12.5 Z" fill="#88b0f0"/></svg>
<div class="btnk" style="left:539px;top:905px;width:230px;height:57px;"></div>
<span class="t big" style="left:570.25px;top:923.0px;letter-spacing:-0.429px;">Carrello</span>
<svg style="left:543px;top:921.5px" width="22" height="24" viewBox="0 0 22 24"><path d="M8 4.5 Q12 0.5 16 3.5 L14.5 6 L8.5 6.5 Z" fill="#68c858" stroke="#389030" stroke-width="0.7"/><path d="M2 7 L17 5.5 L17.5 15.5 L5 18 Z" fill="#d4d0ec" stroke="#9090b0" stroke-width="0.9"/><path d="M17 2.5 L20 2 L19 17.5 L6 20" fill="none" stroke="#8888a0" stroke-width="1.4"/><path d="M5 9 L16 8 M5 12 L16.5 10.8 M5 15 L16.5 13.4 M8 7 L9 17 M12 6.5 L13 16.3" stroke="#a8a4c8" stroke-width="0.8"/><circle cx="7.5" cy="21.8" r="1.9" fill="#686870"/><circle cx="17" cy="20.5" r="1.9" fill="#686870"/></svg>
<div class="editg" style="left:852px;top:755px;width:406px;height:177px;"></div>
<span class="t" style="left:913.25px;top:766.5px;letter-spacing:0.008px;">Totale corpo :</span>
<div class="edit" style="left:1011px;top:761px;width:142px;height:31px;"></div>
<span class="t" style="left:1090.25px;top:765.5px;letter-spacing:-0.129px;">1'002,00</span>
<div class="editg" style="left:1154px;top:761px;width:70px;height:31px;"></div>
<span class="t" style="left:880.25px;top:799.5px;letter-spacing:-0.059px;">Spese di incasso :</span>
<div class="edit" style="left:1011px;top:794px;width:142px;height:31px;"></div>
<span class="t" style="left:1120.5px;top:798.5px;letter-spacing:-0.433px;">0,00</span>
<span class="t" style="left:874.25px;top:832.5px;letter-spacing:0.000px;">Spese spedizione :</span>
<div class="edit" style="left:1011px;top:827px;width:142px;height:31px;"></div>
<span class="t" style="left:1120.5px;top:831.5px;letter-spacing:-0.433px;">0,00</span>
<div class="editg" style="left:1154px;top:827px;width:66px;height:31px;"></div>
<span class="t" style="left:1155.75px;top:831.5px;">€</span>
<span class="t" style="left:897.25px;top:865.5px;letter-spacing:0.007px;">Totale imposte :</span>
<div class="edit" style="left:1011px;top:860px;width:142px;height:31px;"></div>
<span class="t" style="left:1101.75px;top:864.5px;letter-spacing:-0.100px;">200,40</span>
<div class="editg" style="left:1154px;top:860px;width:66px;height:31px;"></div>
<span class="t" style="left:1155.75px;top:864.5px;">€</span>
<span class="t" style="left:873.75px;top:898.5px;letter-spacing:0.029px;">Totale documento :</span>
<div class="edit" style="left:1011px;top:893px;width:142px;height:31px;"></div>
<span class="t" style="left:1081.5px;top:896.5px;letter-spacing:0.543px;font-size:17px;font-weight:bold;">1'202,40</span>
<div class="editg" style="left:1154px;top:893px;width:66px;height:31px;"></div>
<span class="t" style="left:1155.75px;top:897.5px;">€</span>
<div class="btn" style="left:1226px;top:761px;width:28px;height:31px;"></div>
<span class="t" style="left:1226px;top:768.5px;width:28px;text-align:center;">?</span>
<div class="btn" style="left:1226px;top:893px;width:28px;height:31px;"></div>
<svg style="left:1231px;top:899px" width="18" height="18" viewBox="0 0 18 18"><path d="M10 10 L16 16" stroke="#e8a040" stroke-width="2.6" stroke-linecap="round"/><circle cx="6.5" cy="6.5" r="4.8" fill="#d8f0f0" stroke="#48a8a0" stroke-width="1.3"/><path d="M4 6.5 L9 6.5 M6.5 4 L6.5 9" stroke="#28a040" stroke-width="1.4"/></svg>
<div class="editg" style="left:856px;top:935px;width:406px;height:42px;"></div>
<span class="t" style="left:879.25px;top:943.5px;letter-spacing:-0.118px;">Peso lordo :</span>
<div class="edit" style="left:969px;top:938px;width:99px;height:34px;"></div>
<span class="t gray" style="left:1018.25px;top:942.5px;letter-spacing:1.400px;">5,148</span>
<span class="t" style="left:1086.0px;top:943.5px;letter-spacing:0.114px;">Volume :</span>
<div class="edit" style="left:1152px;top:938px;width:80px;height:34px;"></div>
<span class="t gray" style="left:1218.25px;top:942.5px;">0</span>
</body></html>
